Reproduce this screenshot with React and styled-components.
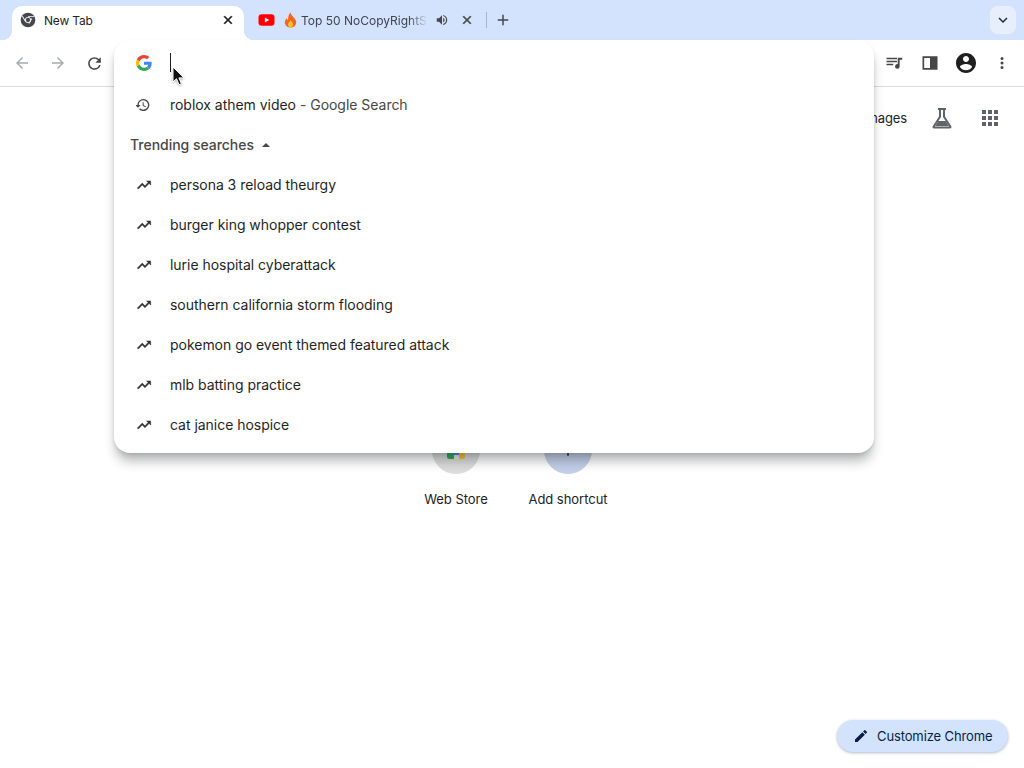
import React from "react";
import styled, { createGlobalStyle } from "styled-components";

const Global = createGlobalStyle`
  html, body { margin: 0; padding: 0; background: #fff; }
  body { font-family: Inter, "Liberation Sans", sans-serif; color: #202124; overflow: hidden; }
`;

const P = {
  back: "M20 11H7.83l5.59-5.59L12 4l-8 8 8 8 1.41-1.41L7.83 13H20v-2z",
  fwd: "M12 4l-1.41 1.41L16.17 11H4v2h12.17l-5.58 5.59L12 20l8-8z",
  reload: "M17.65 6.35A7.958 7.958 0 0 0 12 4c-4.42 0-7.99 3.58-7.99 8s3.57 8 7.99 8c3.73 0 6.84-2.55 7.73-6h-2.08A5.99 5.99 0 0 1 12 18c-3.31 0-6-2.69-6-6s2.69-6 6-6c1.66 0 3.14.69 4.22 1.78L13 11h7V4l-2.35 2.35z",
  close: "M19 6.41 17.59 5 12 10.59 6.41 5 5 6.41 10.59 12 5 17.59 6.41 19 12 13.41 17.59 19 19 17.59 13.41 12z",
  plus: "M19 13h-6v6h-2v-6H5v-2h6V5h2v6h6v2z",
  chevron: "M7.41 8.59 12 13.17l4.59-4.58L18 10l-6 6-6-6z",
  volume: "M3 9v6h4l5 5V4L7 9H3zm13.5 3A4.5 4.5 0 0 0 14 7.97v8.05c1.48-.73 2.5-2.25 2.5-4.02zM14 3.23v2.06c2.89.86 5 3.54 5 6.71s-2.11 5.85-5 6.71v2.06c4.01-.91 7-4.49 7-8.77s-2.99-7.86-7-8.77z",
  trending: "M16 6l2.29 2.29-4.88 4.88-4-4L2 16.59 3.41 18l6-6 4 4 6.3-6.29L22 12V6z",
  history: "M11 3a9 9 0 1 1-6.36 15.36l1.42-1.42A7 7 0 1 0 4 12h3l-4 4-4-4h3a9 9 0 0 1 9-9zm-1 5h1.5v4.25l3.5 2.08-.72 1.21L10 13V8z",
  edit: "M3 17.25V21h3.75L17.81 9.94l-3.75-3.75L3 17.25zM20.71 7.04a1 1 0 0 0 0-1.41l-2.34-2.34a1 1 0 0 0-1.41 0l-1.83 1.83 3.75 3.75 1.83-1.83z",
  account: "M12 2C6.48 2 2 6.48 2 12s4.48 10 10 10 10-4.48 10-10S17.52 2 12 2zm0 3c1.66 0 3 1.34 3 3s-1.34 3-3 3-3-1.34-3-3 1.34-3 3-3zm0 14.2a7.2 7.2 0 0 1-6-3.22c.03-1.99 4-3.08 6-3.08 1.99 0 5.97 1.09 6 3.08a7.2 7.2 0 0 1-6 3.22z",
  more: "M12 8a2 2 0 1 0 0-4 2 2 0 0 0 0 4zm0 2a2 2 0 1 0 0 4 2 2 0 0 0 0-4zm0 6a2 2 0 1 0 0 4 2 2 0 0 0 0-4z",
  queue: "M2 5h14v2H2zm0 4h14v2H2zm0 4h9v2H2zm15-8h6v2.500h-3.500V16.500a3 3 0 1 1-2.500-2.950V5z",
  panel: "M3 4h18v16H3V4zm2 2v12h7V6H5zm9 0v12h5V6h-5z",
  panelFill: "M13 5h7v14h-7z",
  flask: "M8 2h8v2h-1v6.400l6.300 9.800c.7 1.200-.1 2.300-1.500 2.300H4.200c-1.400 0-2.200-1.100-1.500-2.300L9 10.400V4H8V2zm3 2v7L4.900 20.500h14.200L13 11V4h-2z",
  liquid: "M8.300 15h7.400l3 5H5.300z",
  apps: "M4 8h4V4H4v4zm6 12h4v-4h-4v4zm-6 0h4v-4H4v4zm0-6h4v-4H4v4zm6 0h4v-4h-4v4zm6-10v4h4V4h-4zm-6 4h4V4h-4v4zm6 6h4v-4h-4v4zm0 6h4v-4h-4v4z",
};

const Svg = styled.svg`
  display: block;
  flex: none;
  width: ${(p) => p.$size || 16}px;
  height: ${(p) => p.$size || 16}px;
  fill: ${(p) => p.$color || "#474747"};
  stroke: ${(p) => (p.$bold ? p.$color : "none")};
  stroke-width: ${(p) => p.$bold || 0};
`;
const Icon = ({ d, size, color, bold }) => (
  <Svg viewBox="0 0 24 24" $size={size} $color={color} $bold={bold}><path d={d} /></Svg>
);

const GoogleG = () => (
  <Svg viewBox="0 0 48 48" $size={16}>
    <path fill="#EA4335" d="M24 9.5c3.5 0 6.7 1.2 9.2 3.6l6.9-6.9C35.9 2.4 30.5 0 24 0 14.6 0 6.5 5.4 2.6 13.2l8 6.2C12.5 13.7 17.800 9.5 24 9.500z" />
    <path fill="#4285F4" d="M47 24.500c0-1.600-.1-3.100-.4-4.500H24v9h13c-.6 3-2.300 5.500-4.800 7.200l7.700 6C44.400 38 47 31.800 47 24.500z" />
    <path fill="#FBBC05" d="M10.600 28.600A14.500 14.500 0 0 1 10.600 19.400l-8-6.200a24 24 0 0 0 0 21.600l8-6.200z" />
    <path fill="#34A853" d="M24 48c6.500 0 11.900-2.100 15.900-5.800l-7.700-6c-2.200 1.500-4.900 2.300-8.200 2.300-6.200 0-11.500-4.200-13.400-9.900l-8 6.200C6.500 42.600 14.600 48 24 48z" />
  </Svg>
);

const ChromeLogo = () => (
  <Svg viewBox="0 0 24 24" $size={16} $color="#45474a">
    <path d="M12 1a11 11 0 1 0 0 22 11 11 0 0 0 0-22zm0 6.500a4.500 4.500 0 1 1 0 9 4.500 4.500 0 0 1 0-9z" />
    <path fill="#fff" d="M12 6h9.300v1.300H12zM7.600 14.500 3 6.500l1.100-.7 4.600 8zM12.800 17.200l4.600-8 1.100.6-4.600 8z" />
    <circle cx="12" cy="12" r="3.200" />
  </Svg>
);

const StoreIcon = () => (
  <Svg viewBox="0 0 20 20" $size={20}>
    <rect x="1" y="3" width="18" height="16" rx="2" fill="#e8eaed" />
    <path d="M1 8h6v5H1z" fill="#db4437" />
    <path d="M1 13h7v6H3a2 2 0 0 1-2-2z" fill="#34a853" />
    <path d="M13 8h6v9a2 2 0 0 1-2 2h-4z" fill="#fbc02d" />
    <path d="M7 8h6v7H7z" fill="#4285f4" />
    <path d="M7 8h6v3H7z" fill="#fff" />
  </Svg>
);

const YouTube = () => (
  <YtSvg viewBox="0 0 16 12">
    <rect width="16" height="11.500" y=".25" rx="3" fill="#f00" />
    <path d="M6.400 3.500v5L10.600 6z" fill="#fff" />
  </YtSvg>
);
const YtSvg = styled.svg`display:block;flex:none;width:17px;height:12px;`;

const Flame = () => (
  <FlameSvg viewBox="0 0 14 16">
    <path fill="#f4651f" d="M7 0c.5 2.500 2 3.500 3.500 5.300 2 2.300 3 4 2.600 6.200C12.500 14.500 10 16 7 16s-5.500-1.500-6-4.500C.6 9.300 1.600 7.500 3 6c.2 1 .6 1.800 1.400 2.300C4.300 5 5 2 7 0z" />
    <path fill="#fbc02d" d="M7.200 8c.3 1.300 2.700 2.500 2.600 4.800C9.700 14.600 8.500 16 7 16s-2.800-1.300-2.800-3.100C4.200 10.900 6.500 10 7.200 8z" />
  </FlameSvg>
);
const FlameSvg = styled.svg`display:block;flex:none;width:13px;height:16px;margin-left:9px;`;

const Page = styled.div`
  width: 1024px;
  height: 768px;
  position: relative;
  overflow: hidden;
  display: flex;
  flex-direction: column;
`;

const TabStrip = styled.div`
  height: 40px;
  flex: none;
  background: #d3e3fd;
  display: flex;
  align-items: flex-start;
  padding-left: 12px;
  padding-right: 8px;
`;

const ActiveTab = styled.div`
  position: relative;
  width: 232px;
  height: 34px;
  margin-top: 6px;
  box-sizing: border-box;
  background: #fff;
  border-radius: 10px 10px 0 0;
  display: flex;
  align-items: center;
  padding: 0 9px 6px 8px;
  &::before, &::after {
    content: "";
    position: absolute;
    bottom: 0;
    width: 10px;
    height: 10px;
  }
  &::before { left: -10px; background: radial-gradient(circle at 0 0, transparent 10px, #fff 10.500px); }
  &::after { right: -10px; background: radial-gradient(circle at 100% 0, transparent 10px, #fff 10.500px); }
`;

const TabTitle = styled.span`
  flex: 1;
  margin-left: 8px;
  font-size: 12px;
  letter-spacing: -0.2px;
  color: #1f1f1f;
  white-space: nowrap;
`;

const InactiveTab = styled.div`
  height: 28px;
  margin-top: 6px;
  box-sizing: border-box;
  display: flex;
  align-items: center;
  padding-left: 14px;
`;

const FadedTitle = styled.span`
  flex: none;
  width: 127px;
  margin-left: 4px;
  white-space: nowrap;
  font-size: 12px;
  color: #40444d;
  -webkit-mask-image: linear-gradient(to right, #000 85%, transparent);
  mask-image: linear-gradient(to right, #000 85%, transparent);
`;

const TabAction = styled.span`
  display: flex;
  margin-left: ${(p) => p.$gap || 0}px;
`;

const Divider = styled.span`
  width: 1px;
  height: 16px;
  background: #a5b4cc;
  margin-left: 12px;
`;

const NewTab = styled.span`
  display: flex;
  height: 28px;
  margin-top: 6px;
  align-items: center;
  margin-left: 7px;
`;

const Spacer = styled.div`flex: 1;`;

const ListButton = styled.div`
  width: 26px;
  height: 28px;
  margin-top: 6px;
  border-radius: 8px;
  background: #e7effd;
  display: flex;
  align-items: center;
  justify-content: center;
`;

const Toolbar = styled.div`
  height: 47px;
  flex: none;
  box-sizing: border-box;
  background: #fff;
  border-bottom: 1px solid #dadce0;
  padding: 0 4px;
  display: flex;
  align-items: center;
  justify-content: space-between;
`;

const ToolGroup = styled.div`display: flex;`;

const ToolButton = styled.div`
  width: 36px;
  height: 36px;
  display: flex;
  align-items: center;
  justify-content: center;
`;

const Content = styled.main`
  flex: 1;
  display: flex;
  flex-direction: column;
`;

const TopLinks = styled.div`
  height: 48px;
  margin-top: 7px;
  padding-right: 22px;
  display: flex;
  align-items: center;
  justify-content: flex-end;
`;

const ImagesLink = styled.a`
  font-size: 13px;
  letter-spacing: -0.1px;
  color: #202124;
  margin-right: 23px;
`;

const LabButton = styled.div`
  width: 24px;
  margin-right: 24px;
  display: flex;
  justify-content: center;
`;

const Shortcuts = styled.div`
  margin-top: 284px;
  display: flex;
  justify-content: center;
`;

const Shortcut = styled.div`
  width: 112px;
  display: flex;
  flex-direction: column;
  align-items: center;
`;

const Circle = styled.div`
  width: 48px;
  height: 48px;
  border-radius: 50%;
  background: ${(p) => p.$bg};
  display: flex;
  align-items: center;
  justify-content: center;
`;

const ShortcutLabel = styled.span`
  margin-top: 17px;
  font-size: 13px;
  line-height: 16px;
  letter-spacing: -0.03px;
  color: #202124;
`;

const Customize = styled.button`
  position: absolute;
  right: 16px;
  bottom: 16px;
  width: 171px;
  height: 32px;
  border: 0;
  border-radius: 16px;
  background: #d3e3fd;
  box-shadow: 0 1px 3px rgba(32, 50, 90, 0.35);
  display: flex;
  align-items: center;
  gap: 8px;
  padding: 0 0 0 16px;
  font-family: inherit;
  font-size: 13px;
  letter-spacing: -0.12px;
  color: #041e49;
`;

const Dropdown = styled.div`
  position: absolute;
  left: 114px;
  top: 40px;
  width: 760px;
  height: 413px;
  background: #fff;
  border-radius: 16px;
  box-shadow: 0 10px 12px -2px rgba(32, 33, 36, 0.32), 0 2px 4px -1px rgba(32, 33, 36, 0.16);
  z-index: 2;
`;

const InputRow = styled.div`
  height: 45px;
  display: flex;
  align-items: center;
  padding-left: 22px;
`;

const Caret = styled.span`
  display: block;
  width: 1px;
  height: 19px;
  background: #1f1f1f;
  margin-left: 18px;
`;

const Row = styled.div`
  height: 40px;
  display: flex;
  align-items: center;
  padding-left: 22px;
  font-size: 14px;
  color: #1f1f1f;
`;

const RowText = styled.span`
  margin-left: 18px;
  padding-bottom: 2px;
  white-space: nowrap;
  letter-spacing: -0.03px;
`;

const Muted = styled.span`
  color: #474747;
`;

const SectionHead = styled.div`
  height: 40px;
  display: flex;
  align-items: center;
  padding-left: 16px;
  padding-bottom: 2px;
  box-sizing: border-box;
  font-size: 14px;
  font-weight: 500;
  letter-spacing: -0.03px;
  color: #474747;
`;

const Triangle = styled.span`
  width: 0;
  height: 0;
  margin: 2px 0 0 8px;
  border-left: 4px solid transparent;
  border-right: 4px solid transparent;
  border-bottom: 4px solid #474747;
`;

const Pointer = styled.svg`
  position: absolute;
  left: 172px;
  top: 66px;
  width: 13px;
  height: 20px;
  z-index: 3;
  filter: drop-shadow(0 1px 1px rgba(0, 0, 0, 0.3));
`;

const trending = [
  "persona 3 reload theurgy",
  "burger king whopper contest",
  "lurie hospital cyberattack",
  "southern california storm flooding",
  "pokemon go event themed featured attack",
  "mlb batting practice",
  "cat janice hospice",
];

export default function App() {
  return (
    <Page>
      <Global />
      <TabStrip>
        <ActiveTab>
          <ChromeLogo />
          <TabTitle>New Tab</TabTitle>
          <Icon d={P.close} size={14} color="#1f1f1f" bold={1} />
        </ActiveTab>
        <InactiveTab>
          <YouTube />
          <Flame />
          <FadedTitle>Top 50 NoCopyRightS</FadedTitle>
          <TabAction $gap={7}><Icon d={P.volume} size={14} color="#474747" /></TabAction>
          <TabAction $gap={11}><Icon d={P.close} size={14} color="#474747" bold={1} /></TabAction>
          <Divider />
        </InactiveTab>
        <NewTab><Icon d={P.plus} size={18} color="#474747" /></NewTab>
        <Spacer />
        <ListButton><Icon d={P.chevron} size={18} color="#1f2a44" /></ListButton>
      </TabStrip>
      <Toolbar>
        <ToolGroup>
          <ToolButton><Icon d={P.back} size={18} color="#a9abae" /></ToolButton>
          <ToolButton><Icon d={P.fwd} size={18} color="#a9abae" /></ToolButton>
          <ToolButton><Icon d={P.reload} size={19} color="#474747" /></ToolButton>
        </ToolGroup>
        <ToolGroup>
          <ToolButton><Icon d={P.queue} size={18} color="#474747" /></ToolButton>
          <ToolButton>
            <Svg viewBox="0 0 24 24" $size={20} $color="#474747">
              <path d={P.panel} /><path d={P.panelFill} />
            </Svg>
          </ToolButton>
          <ToolButton><Icon d={P.account} size={24} color="#1f1f1f" /></ToolButton>
          <ToolButton><Icon d={P.more} size={18} color="#474747" /></ToolButton>
        </ToolGroup>
      </Toolbar>
      <Content>
        <TopLinks>
          <ImagesLink>Images</ImagesLink>
          <LabButton>
            <Svg viewBox="0 0 24 24" $size={24} $color="#5f6368">
              <path d={P.flask} /><path d={P.liquid} />
            </Svg>
          </LabButton>
          <Icon d={P.apps} size={24} color="#5f6368" />
        </TopLinks>
        <Shortcuts>
          <Shortcut>
            <Circle $bg="#dcdcdc"><StoreIcon /></Circle>
            <ShortcutLabel>Web Store</ShortcutLabel>
          </Shortcut>
          <Shortcut>
            <Circle $bg="#c3d0ea"><Icon d={P.plus} size={20} color="#1f2a44" /></Circle>
            <ShortcutLabel>Add shortcut</ShortcutLabel>
          </Shortcut>
        </Shortcuts>
      </Content>
      <Customize>
        <Icon d={P.edit} size={16} color="#041e49" />
        Customize Chrome
      </Customize>
      <Dropdown>
        <InputRow>
          <GoogleG />
          <Caret />
        </InputRow>
        <Row>
          <Icon d={P.history} size={16} color="#474747" />
          <RowText>roblox athem video <Muted>- Google Search</Muted></RowText>
        </Row>
        <SectionHead>
          Trending searches
          <Triangle />
        </SectionHead>
        {trending.map((t) => (
          <Row key={t}>
            <Icon d={P.trending} size={16} color="#333" bold={0.8} />
            <RowText>{t}</RowText>
          </Row>
        ))}
      </Dropdown>
      <Pointer viewBox="0 0 13 20">
        <path d="M1 1v15l3.500-3.300 2.500 6 2.400-1-2.500-5.800H12z" fill="#111" stroke="#fff" strokeWidth="1" />
      </Pointer>
    </Page>
  );
}
